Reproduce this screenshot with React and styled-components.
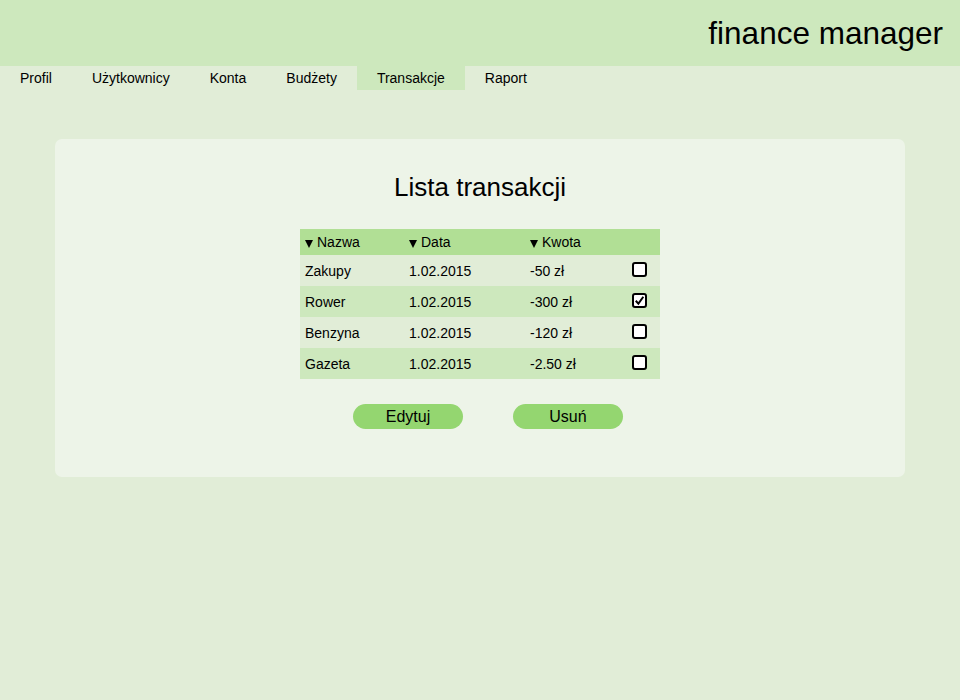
import React, { useState } from "react";
import styled, { createGlobalStyle } from "styled-components";

const GlobalStyle = createGlobalStyle`
  body {
    margin: 0;
    background: #e1edd7;
    font-family: "Liberation Sans", Arial, sans-serif;
    color: #000;
  }
`;

const tabs = ["Profil", "Użytkownicy", "Konta", "Budżety", "Transakcje", "Raport"];

const initialRows = [
  { name: "Zakupy", date: "1.02.2015", amount: "-50 zł", checked: false },
  { name: "Rower", date: "1.02.2015", amount: "-300 zł", checked: true },
  { name: "Benzyna", date: "1.02.2015", amount: "-120 zł", checked: false },
  { name: "Gazeta", date: "1.02.2015", amount: "-2.50 zł", checked: false },
];

const App = () => {
  const [rows, setRows] = useState(initialRows);

  const toggle = (i) => {
    setRows(rows.map((r, idx) => (idx === i ? { ...r, checked: !r.checked } : r)));
  };

  return (
    <Page>
      <GlobalStyle />
      <Header>
        <Logo>finance manager</Logo>
      </Header>
      <Nav>
        {tabs.map((t) => (
          <Tab key={t} active={t === "Transakcje"}>
            {t}
          </Tab>
        ))}
      </Nav>
      <Card>
        <Title>Lista transakcji</Title>
        <Table>
          <thead>
            <HeadRow>
              <HeadCell width={104}>
                <Arrow />
                Nazwa
              </HeadCell>
              <HeadCell width={121}>
                <Arrow />
                Data
              </HeadCell>
              <HeadCell width={95}>
                <Arrow />
                Kwota
              </HeadCell>
              <HeadCell width={40}></HeadCell>
            </HeadRow>
          </thead>
          <tbody>
            {rows.map((r, i) => (
              <Row key={r.name} odd={i % 2 === 1}>
                <Cell>{r.name}</Cell>
                <Cell>{r.date}</Cell>
                <Cell>{r.amount}</Cell>
                <CheckCell>
                  <Check checked={r.checked} onClick={() => toggle(i)}>
                    {r.checked && (
                      <svg width="11" height="11" viewBox="0 0 10 10">
                        <path d="M1.6 5.2 L4 7.8 L8.5 1.6" fill="none" stroke="#000" strokeWidth="1.8" />
                      </svg>
                    )}
                  </Check>
                </CheckCell>
              </Row>
            ))}
          </tbody>
        </Table>
        <Buttons>
          <Button>Edytuj</Button>
          <Button>Usuń</Button>
        </Buttons>
      </Card>
    </Page>
  );
};

const Page = styled.div`
  min-height: 700px;
  background: #e1edd7;
`;

const Header = styled.header`
  height: 66px;
  background: #cde8bd;
  display: flex;
  justify-content: flex-end;
  align-items: flex-start;
  padding-right: 17px;
`;

const Logo = styled.h1`
  margin: 0;
  padding-top: 15px;
  font-size: 31.5px;
  font-weight: normal;
  line-height: 37px;
`;

const Nav = styled.nav`
  display: flex;
  height: 24px;
`;

const Tab = styled.div`
  padding: 0 20px;
  height: 24px;
  line-height: 24px;
  font-size: 14px;
  background: ${(p) => (p.active ? "#cde8bd" : "transparent")};
  cursor: pointer;
`;

const Card = styled.main`
  margin: 49px 55px 0;
  height: 338px;
  box-sizing: border-box;
  background: #edf4e8;
  border-radius: 7px;
  display: flex;
  flex-direction: column;
  align-items: center;
  padding-top: 33px;
`;

const Title = styled.h2`
  margin: 0;
  font-size: 26px;
  font-weight: normal;
  line-height: 30px;
`;

const Table = styled.table`
  margin-top: 27px;
  width: 360px;
  border-collapse: collapse;
  font-size: 14px;
`;

const HeadRow = styled.tr`
  background: #b1df95;
  height: 26px;
`;

const HeadCell = styled.th`
  width: ${(p) => p.width}px;
  padding: 0 0 0 5px;
  text-align: left;
  font-weight: normal;
  vertical-align: middle;
  box-sizing: border-box;
`;

const Arrow = styled.span`
  display: inline-block;
  width: 0;
  height: 0;
  border-left: 4.5px solid transparent;
  border-right: 4.5px solid transparent;
  border-top: 8px solid #000;
  margin-right: 4px;
  vertical-align: -1px;
`;

const Row = styled.tr`
  height: 31px;
  background: ${(p) => (p.odd ? "#cde8bd" : "#e1edd7")};
`;

const Cell = styled.td`
  padding: 0 0 0 5px;
  vertical-align: middle;
`;

const CheckCell = styled.td`
  padding: 0;
  text-align: center;
  vertical-align: middle;
`;

const Check = styled.span`
  display: inline-flex;
  align-items: center;
  justify-content: center;
  width: 15px;
  height: 15px;
  box-sizing: border-box;
  border: 2px solid #000;
  border-radius: 3px;
  background: #fff;
  cursor: pointer;
  vertical-align: middle;
  position: relative;
  top: -2px;
  left: -1px;
`;

const Buttons = styled.div`
  display: flex;
  gap: 50px;
  margin-top: 25px;
  padding-left: 16px;
`;

const Button = styled.button`
  width: 110px;
  height: 25px;
  border: none;
  border-radius: 13px;
  background: #94d670;
  font-family: "Liberation Sans", Arial, sans-serif;
  font-size: 16px;
  color: #000;
  padding: 0;
  cursor: pointer;
`;

export default App;
